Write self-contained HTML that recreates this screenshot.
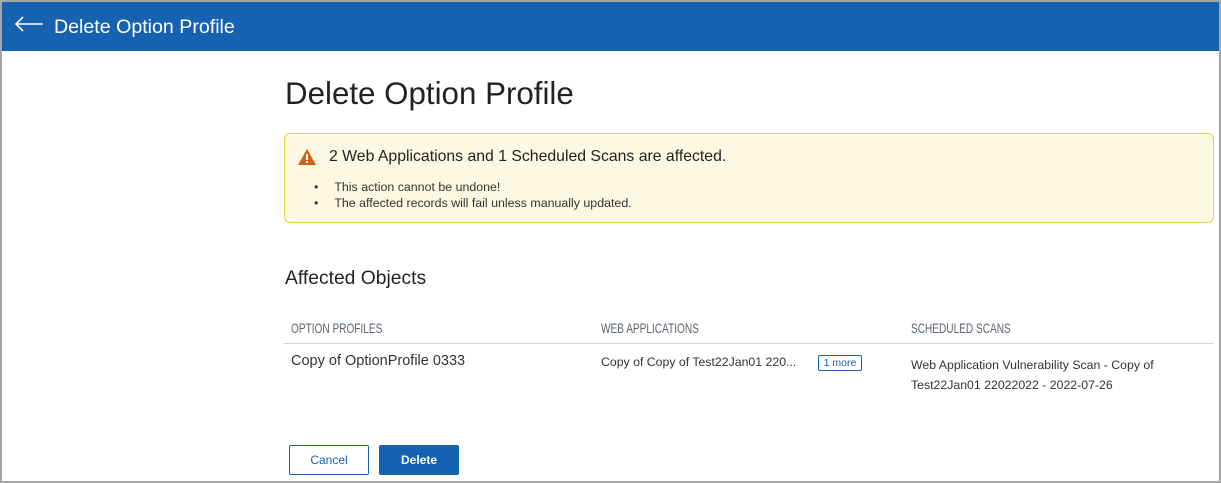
<!DOCTYPE html>
<html><head><meta charset="utf-8"><style>
*{margin:0;padding:0;box-sizing:border-box}
body{width:1221px;height:483px;position:relative;background:#fff;font-family:"Liberation Sans",sans-serif;overflow:hidden}
.frame{position:absolute;left:0;top:0;width:1221px;height:483px;border:2px solid #a6a6a6}
.hdr{position:absolute;left:2px;top:2px;width:1217px;height:49px;background:#1662b0}
.hdr .t{position:absolute;left:52px;top:14px;color:#fff;font-size:19.6px}
.a{position:absolute}
.h1{left:285px;top:76px;font-size:31.3px;color:#222}
.warn{left:284px;top:133px;width:930px;height:90px;background:#fdf8e1;border:1px solid #e8cf4a;border-radius:6px}
.warn .tt{position:absolute;left:44px;top:14px;font-size:15.8px;color:#222}
.warn ul{position:absolute;left:29px;top:45px;font-size:12.4px;color:#333;line-height:16px;padding-left:0;list-style:none}
.warn li:before{content:"•";margin-right:16px;color:#333}
.h2{left:285px;top:268px;font-size:19.3px;color:#222}
.th{top:320px;font-size:14px;color:#5a6470;transform:scaleX(.72);transform-origin:left}
.line{left:284px;top:343px;width:930px;height:1px;background:#d5d5d5}
.td{font-size:12.3px;color:#333}
.btn{top:445px;height:30px;font-size:12px;text-align:center;line-height:28px;border-radius:2px}
</style></head><body>
<div class="hdr">
<svg class="a" style="left:11px;top:13px" width="32" height="18" viewBox="0 0 32 18"><path d="M30 9H3M10 2L3 9L10 16" fill="none" stroke="#fff" stroke-width="1.6"/></svg>
<div class="t">Delete Option Profile</div></div>
<div class="a h1">Delete Option Profile</div>
<div class="a warn">
<svg class="a" style="left:12px;top:14px" width="20" height="18" viewBox="0 0 20 18"><path d="M10 1L19 17H1Z" fill="#d35f17"/><rect x="9" y="6" width="2" height="6" fill="#fff"/><rect x="9" y="13" width="2" height="2" fill="#fff"/></svg>
<div class="tt">2 Web Applications and 1 Scheduled Scans are affected.</div>
<ul><li>This action cannot be undone!</li><li>The affected records will fail unless manually updated.</li></ul></div>
<div class="a h2">Affected Objects</div>
<div class="a th" style="left:291px">OPTION PROFILES</div>
<div class="a th" style="left:601px">WEB APPLICATIONS</div>
<div class="a th" style="left:911px">SCHEDULED SCANS</div>
<div class="a line"></div>
<div class="a" style="left:291px;top:353px;font-size:14.5px;color:#333">Copy of OptionProfile 0333</div>
<div class="a td" style="left:601px;top:355px">Copy of Copy of Test22Jan01 220...</div>
<div class="a" style="left:818px;top:355px;width:44px;height:16px;border:1px solid #1662b0;border-radius:2px;font-size:10.5px;color:#1662b0;text-align:center;line-height:14px">1 more</div>
<div class="a td" style="left:911px;top:355px;line-height:20px">Web Application Vulnerability Scan - Copy of<br>Test22Jan01 22022022 - 2022-07-26</div>
<div class="a btn" style="left:289px;width:80px;border:1px solid #1662b0;color:#1662b0;background:#fff">Cancel</div>
<div class="a btn" style="left:379px;width:80px;background:#1662b0;color:#fff;font-weight:bold;line-height:30px">Delete</div>
<div class="frame"></div>
</body></html>
